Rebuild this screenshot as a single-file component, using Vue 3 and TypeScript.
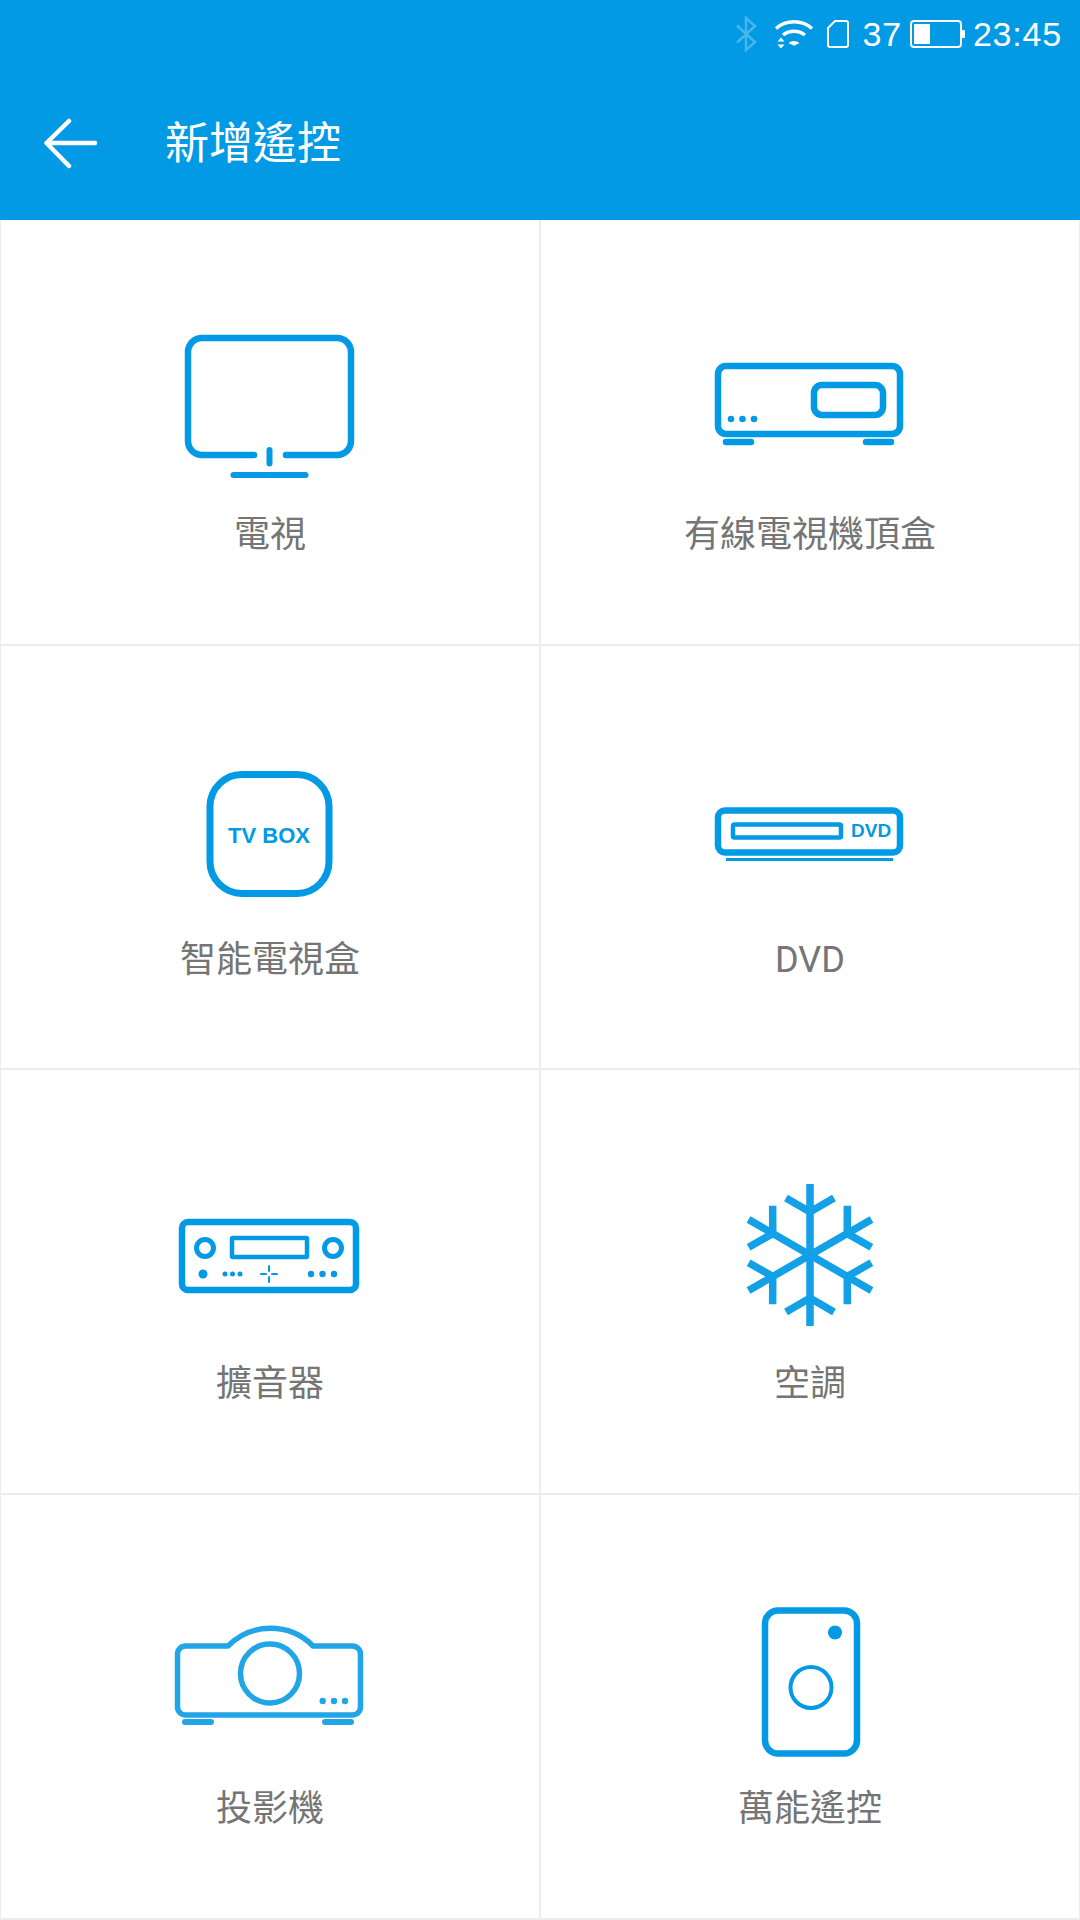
<template>
  <div class="screen">
    <header class="app-header">
      <div class="status-bar">
        <svg class="st-bt" width="23" height="36" viewBox="0 0 23 36" fill="none" stroke="#fff" stroke-opacity=".28" stroke-width="2.5">
          <path d="M2 9.500 20 26 11 34V2l9 8L2 26.500" />
        </svg>
        <svg class="st-wifi" width="40" height="30" viewBox="0 0 40 30" fill="none" stroke="#fff">
          <path d="M2 9.500C12 .5 28 .5 38 9.500" stroke-width="3.400" />
          <path d="M9 16c6.500-5 15.500-5 22 0" stroke-width="3.400" />
          <path d="M14.500 24c3-2.800 8-2.800 11 0l-5.500 2.800z" fill="#fff" stroke="none" />
          <path d="M3.500 22.500 7 18.500l3.500 4zM3.500 25.500h7L7 29.500z" fill="#fff" stroke="none" />
        </svg>
        <svg class="st-sd" width="22" height="28" viewBox="0 0 22 28" fill="none" stroke="#fff" stroke-width="2">
          <path d="M8 1h11a2 2 0 0 1 2 2v22a2 2 0 0 1-2 2H3a2 2 0 0 1-2-2V8z" stroke-linejoin="round" />
        </svg>
        <span class="st-level">37</span>
        <svg class="st-battery" width="55" height="28" viewBox="0 0 55 28" fill="none">
          <rect x="1" y="1" width="50" height="26" rx="3" stroke="#fff" stroke-width="2" />
          <rect x="4" y="4" width="16" height="20" fill="#fff" />
          <rect x="51" y="10" width="4" height="8" rx="1" fill="#fff" />
        </svg>
        <span class="st-time">23:45</span>
      </div>
      <div class="toolbar">
        <svg class="back" width="56" height="52" viewBox="0 0 56 52" fill="none" stroke="#fff" stroke-width="4.500" stroke-linecap="round" stroke-linejoin="round">
          <path d="M53 25H5M27 3 4.500 25 27 48" />
        </svg>
        <h1 class="title">新增遙控</h1>
      </div>
    </header>

    <main class="grid">
      <div class="cell">
        <svg class="icon" viewBox="0 0 270 200" fill="none" stroke="#029ae4" stroke-width="6.500" stroke-linecap="round">
          <path d="M119 145H67a14 14 0 0 1-14-14V42a14 14 0 0 1 14-14h135a14 14 0 0 1 14 14v89a14 14 0 0 1-14 14h-51" />
          <path d="M134.500 140v13.500M98.500 165h72" stroke-width="6" />
        </svg>
        <span class="label">電視</span>
      </div>

      <div class="cell">
        <svg class="icon" viewBox="0 0 270 200" fill="none" stroke="#029ae4" stroke-width="6.500" stroke-linecap="round">
          <rect x="43" y="56" width="182" height="68" rx="8" />
          <rect x="139" y="75" width="69" height="30" rx="8" />
          <path d="M51 132h25M191 132h25" />
          <g fill="#029ae4" stroke="none">
            <circle cx="56" cy="109" r="3.300" />
            <circle cx="67.500" cy="109" r="3.300" />
            <circle cx="79" cy="109" r="3.300" />
          </g>
        </svg>
        <span class="label">有線電視機頂盒</span>
      </div>

      <div class="cell">
        <svg class="icon" viewBox="0 0 270 200" fill="none" stroke="#029ae4" stroke-width="7">
          <rect x="75" y="39.500" width="119" height="119" rx="32" />
          <text class="icon-text" x="134" y="107.500" text-anchor="middle" font-size="22">TV BOX</text>
        </svg>
        <span class="label">智能電視盒</span>
      </div>

      <div class="cell">
        <svg class="icon" viewBox="0 0 270 200" fill="none" stroke="#029ae4" stroke-width="6.500">
          <rect x="43" y="75.500" width="182" height="42" rx="7" />
          <rect x="58" y="89.500" width="108" height="13" rx="1.500" stroke-width="4.500" />
          <path d="M51 124.500h167" stroke-width="3" />
          <text class="icon-text" x="176" y="102" font-size="19">DVD</text>
        </svg>
        <span class="label">DVD</span>
      </div>

      <div class="cell">
        <svg class="icon" viewBox="0 0 270 200" fill="none" stroke="#029ae4" stroke-width="6.500">
          <rect x="47" y="63" width="174" height="68" rx="6" />
          <circle cx="70" cy="89" r="8.500" stroke-width="5" />
          <circle cx="198" cy="89" r="8.500" stroke-width="5" />
          <rect x="97" y="79" width="75" height="19" rx="1" stroke-width="4.500" />
          <path d="M126 115h5M137 115h5M134 107v5M134 118v5" stroke-width="2" stroke-linecap="round" />
          <g fill="#029ae4" stroke="none">
            <circle cx="68" cy="115" r="4.500" />
            <circle cx="90" cy="115" r="2.500" />
            <circle cx="97.500" cy="115" r="2.500" />
            <circle cx="105" cy="115" r="2.500" />
            <circle cx="176" cy="115" r="3.200" />
            <circle cx="187.500" cy="115" r="3.200" />
            <circle cx="199" cy="115" r="3.200" />
          </g>
        </svg>
        <span class="label">擴音器</span>
      </div>

      <div class="cell">
        <svg class="icon" viewBox="0 0 270 200" fill="none" stroke="#12a0e6" stroke-width="7.500">
          <g v-for="angle in snowAngles" :key="angle" :transform="`rotate(${angle} 135 96)`">
            <path d="M135 96V25M111 39l24 14 24-14" />
          </g>
        </svg>
        <span class="label">空調</span>
      </div>

      <div class="cell">
        <svg class="icon" viewBox="0 0 270 200" fill="none" stroke="#22a5e6" stroke-width="5.500">
          <path d="M93 62H50.500a8 8 0 0 0-8 8v53a8 8 0 0 0 8 8h167a8 8 0 0 0 8-8V70a8 8 0 0 0-8-8H178A60 60 0 0 0 93 62z" stroke-linejoin="round" />
          <circle cx="135" cy="89.500" r="29.500" />
          <path d="M50 138h26M190 138h26" stroke-width="6" stroke-linecap="round" />
          <g fill="#22a5e6" stroke="none">
            <circle cx="187.700" cy="117" r="3.200" />
            <circle cx="199" cy="117" r="3.200" />
            <circle cx="210" cy="117" r="3.200" />
          </g>
        </svg>
        <span class="label">投影機</span>
      </div>

      <div class="cell">
        <svg class="icon" viewBox="0 0 270 200" fill="none" stroke="#029ae4" stroke-width="6.500">
          <rect x="90" y="26.500" width="92" height="143" rx="13" />
          <circle cx="160" cy="48.500" r="7" fill="#029ae4" stroke="none" />
          <circle cx="136" cy="103.500" r="20.500" stroke-width="4" />
        </svg>
        <span class="label">萬能遙控</span>
      </div>
    </main>
  </div>
</template>

<script setup lang="ts">
const snowAngles: number[] = [0, 60, 120, 180, 240, 300]
</script>

<style scoped>
.screen {
  width: 1080px;
  height: 1920px;
  display: flex;
  flex-direction: column;
  background: #fff;
  font-family: Roboto, "Noto Sans CJK TC", sans-serif;
}

.app-header {
  height: 220px;
  background: #029ae4;
  color: #fff;
  flex-shrink: 0;
}

.status-bar {
  height: 68px;
  display: flex;
  align-items: center;
  justify-content: flex-end;
  padding-right: 18px;
  font-family: "Liberation Sans", sans-serif;
  font-size: 34px;
  letter-spacing: 0.8px;
}

.st-bt {
  margin-right: 16px;
}

.st-wifi {
  margin-right: 13px;
}

.st-sd {
  margin-right: 13px;
}

.st-battery {
  margin: 0 8px;
}

.toolbar {
  height: 151px;
  display: flex;
  align-items: center;
  padding-left: 42px;
}

.back {
  margin-right: 67px;
}

.title {
  margin: 0;
  font-size: 44px;
  font-weight: 400;
  line-height: 60px;
}

.grid {
  flex: 1;
  display: grid;
  grid-template-columns: 540px 1fr;
  grid-template-rows: repeat(4, 1fr);
  border-bottom: 2px solid #ececec;
  border-left: 1px solid #ececec;
  border-right: 1px solid #ececec;
}

.cell {
  display: flex;
  flex-direction: column;
  align-items: center;
  padding-top: 89px;
  border-top: 2px solid #ececec;
  margin-top: -1px;
}

.cell:nth-child(odd) {
  border-right: 2px solid #ececec;
}

.cell:nth-child(-n + 2) {
  border-top: none;
  margin-top: 0;
  padding-top: 90px;
}

.icon {
  width: 270px;
  height: 200px;
}

.icon-text {
  font-family: "Liberation Sans", sans-serif;
  font-weight: 700;
  fill: #029ae4;
  stroke: none;
}

.label {
  margin-top: 2px;
  font-size: 36px;
  line-height: 47px;
  color: #757575;
}
</style>
